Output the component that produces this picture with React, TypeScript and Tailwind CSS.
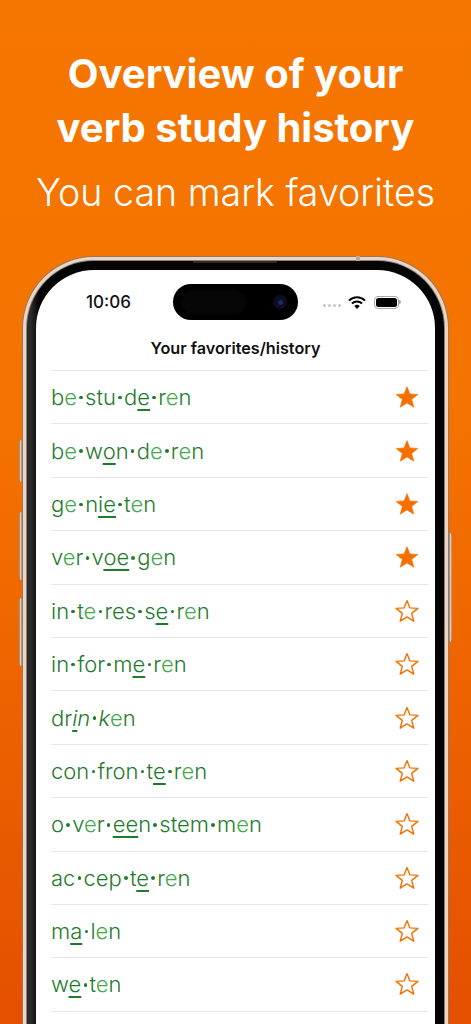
const verbs: { w: string; fav?: boolean }[] = [
  { w: "b(e)·stu·d_e_·r(e)n", fav: true },
  { w: "b(e)·w_o_n·d(e)·r(e)n", fav: true },
  { w: "g(e)·n_ie_·t(e)n", fav: true },
  { w: "v(e)r·v_oe_·g(e)n", fav: true },
  { w: "in·t(e)·res·s_e_·r(e)n" },
  { w: "in·for·m_e_·r(e)n" },
  { w: "dr_/i/_/n/·/k/(e)n" },
  { w: "con·fron·t_e_·r(e)n" },
  { w: "o·v(e)r·_ee_n·stem·m(e)n" },
  { w: "ac·cep·t_e_·r(e)n" },
  { w: "m_a_·l(e)n" },
  { w: "w_e_·t(e)n" },
];

// tiny markup: (x) light schwa, _x_ stressed, /x/ italic, · separator
function Word({ text }: { text: string }) {
  const parts = text.split(/(\([^)]*\)|_\/[^/]*\/_|_[^_]*_|\/[^/]*\/|·)/).filter(Boolean);
  return (
    <span className="text-[22px] leading-none font-[350] text-[#1f7a2e]">
      {parts.map((p, i) => {
        if (p === "·")
          return <span key={i} className="inline-block w-[3.5px] h-[3.5px] mx-[2.3px] mb-[3px] align-middle rounded-full bg-[#1f7a2e]" />;
        if (p.startsWith("(")) return <span key={i} className="text-[#45a94c]">{p.slice(1, -1)}</span>;
        if (p.startsWith("_/"))
          return <span key={i} className="italic underline underline-offset-[4px] decoration-[1.5px]">{p.slice(2, -2)}</span>;
        if (p.startsWith("_"))
          return <span key={i} className="underline underline-offset-[4px] decoration-[1.5px]">{p.slice(1, -1)}</span>;
        if (p.startsWith("/")) return <span key={i} className="italic">{p.slice(1, -1)}</span>;
        return <span key={i}>{p}</span>;
      })}
    </span>
  );
}

function Star({ filled }: { filled?: boolean }) {
  return (
    <svg width="24" height="24" viewBox="0 0 24 24">
      <path
        d="M12 1.6 L14.9 8.9 L22.9 9.4 L16.7 14.4 L18.8 22.2 L12 17.9 L5.2 22.2 L7.3 14.4 L1.1 9.4 L9.1 8.9 Z"
        fill={filled ? "#f57000" : "none"}
        stroke="#f57000"
        strokeWidth={filled ? 0.6 : 1.4}
        strokeLinejoin="round"
      />
    </svg>
  );
}

function Wifi() {
  return (
    <svg width="18" height="13" viewBox="0 0 18 13">
      <path d="M1 4.6 A11.5 11.5 0 0 1 17 4.6" fill="none" stroke="#000" strokeWidth="2" />
      <path d="M3.9 7.5 A7.4 7.4 0 0 1 14.1 7.5" fill="none" stroke="#000" strokeWidth="2" />
      <path d="M9 13 L6.3 10 A3.9 3.9 0 0 1 11.7 10 Z" fill="#000" />
    </svg>
  );
}

function Battery() {
  return (
    <div className="flex items-center">
      <div className="w-[25px] h-[13px] rounded-[4px] border border-[#a8a8a8] p-[1px]">
        <div className="w-full h-full rounded-[2.5px] bg-black" />
      </div>
      <div className="w-[1.5px] h-[4px] rounded-r-full bg-[#a8a8a8]" />
    </div>
  );
}

function SideButton({ className }: { className: string }) {
  return <div className={"absolute w-[3px] bg-gradient-to-r from-[#8d7564] via-[#e3c8b3] to-[#9c8573] " + className} />;
}

export default function App() {
  return (
    <div className="relative w-[471px] h-[1024px] overflow-hidden bg-gradient-to-b from-[#f57600] via-[#f47300] via-40% to-[#e44f00] font-['Inter','Noto_Sans',sans-serif]">
      <div className="pt-[47px] text-center text-white">
        <h1 className="text-[40px] leading-[54px] font-bold">
          Overview of your
          <br />
          verb study history
        </h1>
        <p className="mt-[14px] text-[37.6px] leading-[48px] font-light whitespace-nowrap">You can mark favorites</p>
      </div>

      {/* side buttons */}
      <SideButton className="left-[19px] top-[440px] h-[42px] rounded-l-sm" />
      <SideButton className="left-[19px] top-[512px] h-[68px] rounded-l-sm" />
      <SideButton className="left-[19px] top-[598px] h-[68px] rounded-l-sm" />
      <SideButton className="left-[449px] top-[533px] h-[109px] rounded-r-sm" />

      {/* phone */}
      <div className="relative mx-[22px] mt-[39px] rounded-t-[72px] bg-[#8f7a6a] pt-[1px] px-[1px] h-[800px]">
        <div className="rounded-t-[71px] bg-[#ecd5c2] pt-[3px] px-[3px] h-full">
          <div className="rounded-t-[68px] bg-[#8b8078] pt-[1px] px-[1px] h-full">
            <div className="rounded-t-[67px] bg-gradient-to-r from-[#2a2a2a] from-[1%] via-[#050505] via-[3%] to-[#050505] pt-[9px] px-[9px] h-full">
              <div className="relative rounded-t-[58px] bg-white h-full">
                {/* status bar */}
                <div className="flex items-center h-[64px]">
                  <span className="ml-[50px] mt-[2px] w-[46px] text-[17px] font-medium text-[#111]">10:06</span>
                  <div className="ml-[41px] w-[125px] h-[36px] rounded-full bg-black flex items-center justify-between pl-[8px] pr-[11px]">
                    <div className="w-[65px] h-[24px] rounded-full bg-[#060606]" />
                    <div className="w-[14px] h-[14px] rounded-full bg-[#0c0c24] flex items-center justify-center">
                      <div className="w-[5px] h-[5px] rounded-full bg-[#1c2a5c]" />
                    </div>
                  </div>
                  <div className="ml-[25px] mt-[6px] flex gap-[2px] items-center">
                    <span className="w-[3px] h-[3px] rounded-full bg-[#c4c4c4]" />
                    <span className="w-[3px] h-[3px] rounded-full bg-[#c4c4c4]" />
                    <span className="w-[3px] h-[3px] rounded-full bg-[#c4c4c4]" />
                    <span className="w-[3px] h-[3px] rounded-full bg-[#c4c4c4]" />
                  </div>
                  <div className="ml-[7px]">
                    <Wifi />
                  </div>
                  <div className="ml-[8px]">
                    <Battery />
                  </div>
                </div>

                <div className="h-[36px] pt-[2px] text-center text-[16.2px] leading-[24px] font-semibold text-[#111]">
                  Your favorites/history
                </div>

                {/* list */}
                <div className="ml-[15px] mr-[7px] border-t border-[#e6e6e6]">
                  {verbs.map((v) => (
                    <div
                      key={v.w}
                      className="flex items-center justify-between h-[53.4px] border-b border-[#e6e6e6] pr-[9px]"
                    >
                      <Word text={v.w} />
                      <Star filled={v.fav} />
                    </div>
                  ))}
                </div>
              </div>
            </div>
          </div>
        </div>
        {/* speaker slit and antenna bands */}
        <div className="absolute left-[171px] top-[5px] w-[84px] h-[2px] rounded-full bg-[#2a2a2a]" />
        <div className="absolute left-[334px] top-0 w-[4px] h-[5px] bg-[#c0a898]" />
      </div>
    </div>
  );
}
